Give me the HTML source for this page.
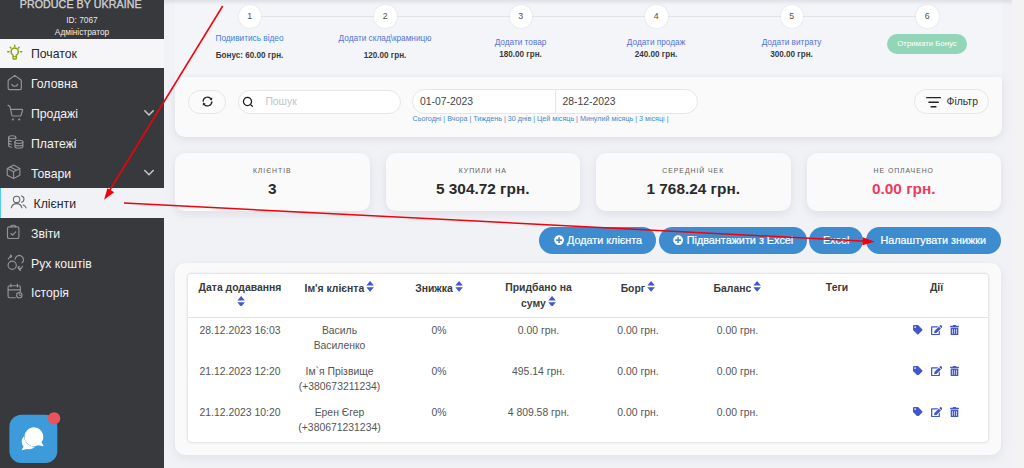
<!DOCTYPE html>
<html lang="uk">
<head>
<meta charset="utf-8">
<title>Клієнти</title>
<style>
*{box-sizing:border-box;margin:0;padding:0}
html,body{width:1024px;height:468px;overflow:hidden}
body{font-family:"Liberation Sans",sans-serif;background:#f1f2f6;color:#444;font-size:10.4px;position:relative}
.abs{position:absolute}
/* sidebar */
#side{position:absolute;left:0;top:0;width:164.4px;height:468px;background:#38393d;color:#eee}
#side .brand{position:absolute;left:0;width:164px;text-align:center;color:#d8d8d8;white-space:nowrap}
.mi{position:absolute;left:0;width:164.4px;height:29.85px;color:#f2f2f2;font-size:12.25px;line-height:31.3px;padding-left:31px;white-space:nowrap}
.mi svg{position:absolute;left:6px;top:6px;width:17px;height:17px;fill:none;stroke:#a9a9a9;stroke-width:1.1;stroke-linecap:round;stroke-linejoin:round}
.mi.start{background:#f6f6f8;color:#26262e}
.mi.act{background:#f1f2f6;color:#26262e;border-left:1.5px solid #56c8f5;padding-left:32.5px}
.mi .chev{position:absolute;left:143px;top:11px;width:10px;height:7px;stroke:#d0d0d0;stroke-width:1.7}
/* top shadow */
#topshade{position:absolute;left:164.4px;top:0;width:847.6px;height:5px;background:linear-gradient(rgba(120,120,130,.17),rgba(120,120,130,0))}
#sbar{position:absolute;left:1012px;top:0;width:12px;height:468px;background:#f3f3f3}
.card{position:absolute;background:#fafafa;border-radius:10px;box-shadow:0 3px 10px rgba(120,125,150,.13)}
.step{position:absolute;top:5px;width:22.6px;height:22.6px;border-radius:50%;background:#fff;box-shadow:0 0 2px rgba(0,0,0,.12);text-align:center;line-height:23.8px;font-size:8.8px;color:#505050}
.slabel{position:absolute;text-align:center;font-size:8.25px;color:#5373d8;white-space:nowrap;transform:translateX(-50%)}
.sval{position:absolute;text-align:center;font-size:8.15px;font-weight:bold;color:#3a3a3a;white-space:nowrap;transform:translateX(-50%)}
.pill{position:absolute;border:1px solid #e6e6e6;border-radius:13px;background:#fbfbfb}
.stat{position:absolute;top:152.5px;width:194.5px;height:58px;background:#fafafa;border-radius:10px;box-shadow:0 3px 10px rgba(120,125,150,.16);text-align:center}
.stat .l{position:absolute;left:0;right:0;top:14px;font-size:6.9px;letter-spacing:.95px;color:#606060;text-transform:uppercase}
.stat .v{position:absolute;left:0;right:0;top:27px;font-size:15.38px;font-weight:bold;color:#2b2b2b}
.btn{-webkit-text-stroke:.2px #fff;position:absolute;top:226.6px;height:27px;border-radius:13.4px;background:#3d8ccf;color:#fff;font-size:10.8px;line-height:26.9px;text-align:center;white-space:nowrap}
.th{position:absolute;top:280.8px;width:99.5px;text-align:center;font-weight:bold;font-size:10.4px;line-height:14.7px;color:#3a3a3a}
.td{position:absolute;width:99.5px;text-align:center;font-size:10.4px;line-height:14.7px;color:#555;white-space:nowrap}
.sort{display:inline-block;width:8.2px;height:10.8px;vertical-align:-0.3px;margin-left:2px}
</style>
</head>
<body>
<div id="sbar"></div>

<!-- steps / filter card -->
<div class="abs" style="left:175px;top:0;width:826.5px;height:130px;background:#f4f5f9"></div>
<div id="topshade"></div>
<div class="abs" style="left:175px;top:76.5px;width:826.5px;height:60.5px;background:#fafafa;border-radius:2px 2px 10px 10px;box-shadow:0 2px 9px rgba(120,125,150,.17)"></div>

<div class="abs" style="left:250px;top:16px;width:677px;height:1px;background:#e2e3e8"></div>
<div class="step" style="left:238.5px">1</div>
<div class="step" style="left:374px">2</div>
<div class="step" style="left:509.5px">3</div>
<div class="step" style="left:645px">4</div>
<div class="step" style="left:780.5px">5</div>
<div class="step" style="left:916px">6</div>

<div class="slabel" style="left:249.5px;top:34.2px;color:#3a7fdb">Подивитись відео</div>
<div class="sval" style="left:249.5px;top:50.9px">Бонус: 60.00 грн.</div>
<div class="slabel" style="left:385px;top:34.2px">Додати склад\крамницю</div>
<div class="sval" style="left:385px;top:50.9px">120.00 грн.</div>
<div class="slabel" style="left:520.5px;top:38px">Додати товар</div>
<div class="sval" style="left:520.5px;top:50px">180.00 грн.</div>
<div class="slabel" style="left:656px;top:38px">Додати продаж</div>
<div class="sval" style="left:656px;top:50px">240.00 грн.</div>
<div class="slabel" style="left:791.5px;top:38px">Додати витрату</div>
<div class="sval" style="left:791.5px;top:50px">300.00 грн.</div>
<div class="abs" style="left:887px;top:34px;width:80px;height:20px;border-radius:10px;background:#93d5b8;color:#fff;font-size:7.8px;line-height:20px;text-align:center">Отримати Бонус</div>

<!-- filter row -->
<div class="pill" style="left:188px;top:89.5px;width:38px;height:24px">
<svg class="abs" style="left:11.500px;top:4.600px;width:13px;height:13px" viewBox="-6.500 -6.500 13 13" fill="none" stroke="#1f1f1f" stroke-width="1.250" stroke-linecap="round" stroke-linejoin="round"><path d="M-4.38 -0.38A4.4 4.4 0 0 1 3.60 -2.52"/><path d="M4.38 0.38A4.4 4.4 0 0 1 -3.60 2.52"/><path d="M4.46 -1.07L4.78 -3.92L2.01 -2.32z" fill="#1f1f1f" stroke="none"/><path d="M-4.46 1.07L-4.78 3.92L-2.01 2.32z" fill="#1f1f1f" stroke="none"/></svg>
</div>
<div class="pill" style="left:238.2px;top:89.5px;width:162.8px;height:24px;background:#fff">
<svg class="abs" style="left:1.600px;top:4.900px;width:13px;height:13px" viewBox="-6.500 -6.500 13 13" fill="none" stroke="#1f1f1f" stroke-width="1.3" stroke-linecap="round"><circle cx="0" cy="0" r="4.050"/><path d="M3.100 3.100l1.700 1.700"/></svg>
<div class="abs" style="left:26.2px;top:0;line-height:22px;font-size:10.4px;color:#c4c4c4">Пошук</div>
</div>
<div class="pill" style="left:412px;top:89px;width:286px;height:24.8px;background:#fff">
<div class="abs" style="left:142px;top:0;width:1px;height:23px;background:#e6e6e6"></div>
<div class="abs" style="left:7px;top:0;line-height:23.8px;font-size:10.35px;color:#444">01-07-2023</div>
<div class="abs" style="left:149.5px;top:0;line-height:23.8px;font-size:10.35px;color:#444">28-12-2023</div>
</div>
<div class="abs" style="left:412.5px;top:114.5px;font-size:7.17px;color:#3f8ad0;white-space:nowrap;line-height:9px">Сьогодні | Вчора | Тиждень | 30 днів | Цей місяць | Минулий місяць | 3 місяці |</div>
<div class="pill" style="left:914px;top:89.1px;width:75px;height:24.6px">
<svg class="abs" style="left:10.600px;top:5.900px;width:16px;height:12px" viewBox="0 0 16 12" fill="none" stroke="#222" stroke-width="1.450"><path d="M.2 1.600h14.700M2.400 6.200h10.400M4.600 10.800h5.800"/></svg>
<div class="abs" style="left:31.5px;top:0;line-height:24px;font-size:10.4px;color:#333">Фільтр</div>
</div>

<!-- stats -->
<div class="stat" style="left:175px"><div class="l">Клієнтів</div><div class="v">3</div></div>
<div class="stat" style="left:385.5px"><div class="l">Купили на</div><div class="v">5 304.72 грн.</div></div>
<div class="stat" style="left:596px"><div class="l">Середній чек</div><div class="v">1 768.24 грн.</div></div>
<div class="stat" style="left:806.5px"><div class="l">Не оплачено</div><div class="v" style="color:#ec3b5e">0.00 грн.</div></div>

<!-- buttons -->
<div class="btn" style="left:539px;width:117.2px;text-align:left;padding-left:28px"><svg class="abs" style="left:14.5px;top:8.300px;width:10.2px;height:10.2px" viewBox="0 0 512 512"><path fill="#fff" d="M256 8C119 8 8 119 8 256s111 248 248 248 248-111 248-248S393 8 256 8zm144 276c0 6.600-5.400 12-12 12h-92v92c0 6.600-5.400 12-12 12h-56c-6.600 0-12-5.400-12-12v-92h-92c-6.600 0-12-5.400-12-12v-56c0-6.600 5.400-12 12-12h92v-92c0-6.600 5.400-12 12-12h56c6.600 0 12 5.400 12 12v92h92c6.600 0 12 5.400 12 12v56z"/></svg>Додати клієнта</div>
<div class="btn" style="left:658.6px;width:148px;text-align:left;padding-left:28.2px"><svg class="abs" style="left:14px;top:8.300px;width:10.2px;height:10.2px" viewBox="0 0 512 512"><path fill="#fff" d="M256 8C119 8 8 119 8 256s111 248 248 248 248-111 248-248S393 8 256 8zm144 276c0 6.600-5.400 12-12 12h-92v92c0 6.600-5.400 12-12 12h-56c-6.600 0-12-5.400-12-12v-92h-92c-6.600 0-12-5.400-12-12v-56c0-6.600 5.400-12 12-12h92v-92c0-6.600 5.400-12 12-12h56c6.600 0 12 5.400 12 12v92h92c6.600 0 12 5.400 12 12v56z"/></svg>Підвантажити з Excel</div>
<div class="btn" style="left:808.8px;width:54.6px">Excel</div>
<div class="btn" style="left:866px;width:134.5px">Налаштувати знижки</div>

<!-- table card -->
<div class="card" style="left:175px;top:262.5px;width:826.2px;height:192px"></div>
<div class="abs" style="left:188px;top:273.5px;width:800px;height:168px;background:#fff;border-radius:3px;box-shadow:0 0 3px rgba(0,0,0,.22)"></div>
<div class="abs" style="left:188px;top:316.5px;width:800px;height:1px;background:#e2e2e2"></div>

<div class="th" style="left:190.25px">Дата додавання<br><svg class="sort" viewBox="0 0 7 10"><path d="M3.500 0L7 4.200H0z" fill="#4357cc"/><path d="M3.500 10L7 5.800H0z" fill="#4357cc"/></svg></div>
<div class="th" style="left:289.75px">Ім'я клієнта<svg class="sort" viewBox="0 0 7 10"><path d="M3.500 0L7 4.200H0z" fill="#4357cc"/><path d="M3.500 10L7 5.800H0z" fill="#4357cc"/></svg></div>
<div class="th" style="left:389.25px">Знижка<svg class="sort" viewBox="0 0 7 10"><path d="M3.500 0L7 4.200H0z" fill="#4357cc"/><path d="M3.500 10L7 5.800H0z" fill="#4357cc"/></svg></div>
<div class="th" style="left:488.75px">Придбано на<br>суму<svg class="sort" viewBox="0 0 7 10"><path d="M3.500 0L7 4.200H0z" fill="#4357cc"/><path d="M3.500 10L7 5.800H0z" fill="#4357cc"/></svg></div>
<div class="th" style="left:588.25px">Борг<svg class="sort" viewBox="0 0 7 10"><path d="M3.500 0L7 4.200H0z" fill="#4357cc"/><path d="M3.500 10L7 5.800H0z" fill="#4357cc"/></svg></div>
<div class="th" style="left:687.75px">Баланс<svg class="sort" viewBox="0 0 7 10"><path d="M3.500 0L7 4.200H0z" fill="#4357cc"/><path d="M3.500 10L7 5.800H0z" fill="#4357cc"/></svg></div>
<div class="th" style="left:787.25px">Теги</div>
<div class="th" style="left:886.75px">Дії</div>
<div class="td" style="left:190.25px;top:324.1px">28.12.2023 16:03</div>
<div class="td" style="left:289.75px;top:324.1px">Василь<br>Василенко</div>
<div class="td" style="left:389.25px;top:324.1px">0%</div>
<div class="td" style="left:488.75px;top:324.1px">0.00 грн.</div>
<div class="td" style="left:588.25px;top:324.1px">0.00 грн.</div>
<div class="td" style="left:687.75px;top:324.1px">0.00 грн.</div>
<svg class="abs" style="left:913px;top:325.0px;width:9.5px;height:9.5px" viewBox="0 0 512 512"><path fill="#4357cc" d="M0 252.100V48C0 21.500 21.500 0 48 0h204.100a48 48 0 0 1 33.900 14.100l211.900 211.900c18.700 18.700 18.700 49.100 0 67.900L293.800 497.900c-18.700 18.700-49.100 18.700-67.900 0L14.100 286.100A48 48 0 0 1 0 252.100zM112 64c-26.500 0-48 21.500-48 48s21.500 48 48 48 48-21.500 48-48-21.500-48-48-48z"/></svg>
<svg class="abs" style="left:930.5px;top:324.7px;width:11.5px;height:10.2px" viewBox="0 0 576 512"><path fill="#4357cc" d="M402.600 83.200l90.200 90.200c3.800 3.800 3.800 10 0 13.800L274.400 405.600l-92.800 10.300c-12.400 1.400-22.900-9.100-21.500-21.500l10.300-92.800L388.800 83.200c3.800-3.800 10-3.800 13.800 0zm162-22.900l-48.800-48.800c-15.200-15.200-39.900-15.200-55.200 0l-35.400 35.400c-3.800 3.800-3.800 10 0 13.800l90.200 90.200c3.800 3.800 10 3.800 13.800 0l35.400-35.400c15.200-15.300 15.200-40 0-55.200zM384 346.200V448H64V128h229.800c3.200 0 6.200-1.300 8.500-3.500l40-40c7.600-7.600 2.200-20.500-8.500-20.500H48C21.500 64 0 85.500 0 112v352c0 26.500 21.500 48 48 48h352c26.500 0 48-21.500 48-48V306.200c0-10.700-12.900-16-20.500-8.500l-40 40c-2.200 2.300-3.500 5.300-3.500 8.500z"/></svg>
<svg class="abs" style="left:950px;top:324.7px;width:9px;height:10.2px" viewBox="0 0 448 512"><path fill="#4357cc" d="M32 464a48 48 0 0 0 48 48h288a48 48 0 0 0 48-48V128H32zm272-256a16 16 0 0 1 32 0v224a16 16 0 0 1-32 0zm-96 0a16 16 0 0 1 32 0v224a16 16 0 0 1-32 0zm-96 0a16 16 0 0 1 32 0v224a16 16 0 0 1-32 0zM432 32H312l-9.400-18.700A24 24 0 0 0 281.100 0H166.800a23.720 23.720 0 0 0-21.400 13.300L136 32H16A16 16 0 0 0 0 48v32a16 16 0 0 0 16 16h416a16 16 0 0 0 16-16V48a16 16 0 0 0-16-16z"/></svg>
<div class="td" style="left:190.25px;top:365.0px">21.12.2023 12:20</div>
<div class="td" style="left:289.75px;top:365.0px">Ім`я Прізвище<br>(+380673211234)</div>
<div class="td" style="left:389.25px;top:365.0px">0%</div>
<div class="td" style="left:488.75px;top:365.0px">495.14 грн.</div>
<div class="td" style="left:588.25px;top:365.0px">0.00 грн.</div>
<div class="td" style="left:687.75px;top:365.0px">0.00 грн.</div>
<svg class="abs" style="left:913px;top:365.9px;width:9.5px;height:9.5px" viewBox="0 0 512 512"><path fill="#4357cc" d="M0 252.100V48C0 21.500 21.500 0 48 0h204.100a48 48 0 0 1 33.900 14.100l211.900 211.900c18.700 18.700 18.700 49.100 0 67.900L293.800 497.900c-18.700 18.700-49.100 18.700-67.900 0L14.100 286.100A48 48 0 0 1 0 252.100zM112 64c-26.500 0-48 21.500-48 48s21.500 48 48 48 48-21.500 48-48-21.500-48-48-48z"/></svg>
<svg class="abs" style="left:930.5px;top:365.6px;width:11.5px;height:10.2px" viewBox="0 0 576 512"><path fill="#4357cc" d="M402.600 83.200l90.200 90.200c3.800 3.800 3.800 10 0 13.800L274.400 405.600l-92.800 10.300c-12.400 1.400-22.900-9.100-21.500-21.500l10.300-92.800L388.800 83.200c3.800-3.800 10-3.800 13.800 0zm162-22.900l-48.800-48.800c-15.200-15.200-39.900-15.200-55.200 0l-35.400 35.400c-3.800 3.800-3.800 10 0 13.800l90.200 90.200c3.800 3.800 10 3.800 13.800 0l35.400-35.400c15.200-15.300 15.200-40 0-55.200zM384 346.200V448H64V128h229.800c3.200 0 6.200-1.300 8.500-3.500l40-40c7.600-7.600 2.200-20.500-8.500-20.500H48C21.500 64 0 85.500 0 112v352c0 26.500 21.500 48 48 48h352c26.500 0 48-21.500 48-48V306.200c0-10.700-12.900-16-20.500-8.500l-40 40c-2.200 2.300-3.500 5.300-3.500 8.500z"/></svg>
<svg class="abs" style="left:950px;top:365.6px;width:9px;height:10.2px" viewBox="0 0 448 512"><path fill="#4357cc" d="M32 464a48 48 0 0 0 48 48h288a48 48 0 0 0 48-48V128H32zm272-256a16 16 0 0 1 32 0v224a16 16 0 0 1-32 0zm-96 0a16 16 0 0 1 32 0v224a16 16 0 0 1-32 0zm-96 0a16 16 0 0 1 32 0v224a16 16 0 0 1-32 0zM432 32H312l-9.400-18.700A24 24 0 0 0 281.100 0H166.800a23.720 23.720 0 0 0-21.400 13.300L136 32H16A16 16 0 0 0 0 48v32a16 16 0 0 0 16 16h416a16 16 0 0 0 16-16V48a16 16 0 0 0-16-16z"/></svg>
<div class="td" style="left:190.25px;top:405.9px">21.12.2023 10:20</div>
<div class="td" style="left:289.75px;top:405.9px">Ерен Єгер<br>(+380671231234)</div>
<div class="td" style="left:389.25px;top:405.9px">0%</div>
<div class="td" style="left:488.75px;top:405.9px">4 809.58 грн.</div>
<div class="td" style="left:588.25px;top:405.9px">0.00 грн.</div>
<div class="td" style="left:687.75px;top:405.9px">0.00 грн.</div>
<svg class="abs" style="left:913px;top:406.8px;width:9.5px;height:9.5px" viewBox="0 0 512 512"><path fill="#4357cc" d="M0 252.100V48C0 21.500 21.500 0 48 0h204.100a48 48 0 0 1 33.900 14.100l211.900 211.900c18.700 18.700 18.700 49.100 0 67.900L293.800 497.900c-18.700 18.700-49.100 18.700-67.900 0L14.100 286.100A48 48 0 0 1 0 252.100zM112 64c-26.500 0-48 21.500-48 48s21.500 48 48 48 48-21.500 48-48-21.500-48-48-48z"/></svg>
<svg class="abs" style="left:930.5px;top:406.5px;width:11.5px;height:10.2px" viewBox="0 0 576 512"><path fill="#4357cc" d="M402.600 83.200l90.200 90.200c3.800 3.800 3.800 10 0 13.800L274.400 405.600l-92.800 10.300c-12.400 1.400-22.900-9.100-21.500-21.500l10.300-92.800L388.800 83.200c3.800-3.800 10-3.800 13.800 0zm162-22.900l-48.800-48.800c-15.200-15.200-39.900-15.200-55.200 0l-35.400 35.400c-3.800 3.800-3.800 10 0 13.800l90.200 90.200c3.800 3.800 10 3.800 13.800 0l35.400-35.400c15.200-15.300 15.200-40 0-55.200zM384 346.200V448H64V128h229.800c3.200 0 6.200-1.300 8.500-3.500l40-40c7.600-7.600 2.200-20.500-8.500-20.500H48C21.500 64 0 85.500 0 112v352c0 26.500 21.500 48 48 48h352c26.500 0 48-21.500 48-48V306.200c0-10.700-12.900-16-20.500-8.500l-40 40c-2.200 2.300-3.500 5.300-3.500 8.500z"/></svg>
<svg class="abs" style="left:950px;top:406.5px;width:9px;height:10.2px" viewBox="0 0 448 512"><path fill="#4357cc" d="M32 464a48 48 0 0 0 48 48h288a48 48 0 0 0 48-48V128H32zm272-256a16 16 0 0 1 32 0v224a16 16 0 0 1-32 0zm-96 0a16 16 0 0 1 32 0v224a16 16 0 0 1-32 0zm-96 0a16 16 0 0 1 32 0v224a16 16 0 0 1-32 0zM432 32H312l-9.400-18.700A24 24 0 0 0 281.100 0H166.800a23.720 23.720 0 0 0-21.400 13.300L136 32H16A16 16 0 0 0 0 48v32a16 16 0 0 0 16 16h416a16 16 0 0 0 16-16V48a16 16 0 0 0-16-16z"/></svg>

<!-- sidebar -->
<div id="side">
<div class="brand" style="top:-1.6px;font-size:10.7px;font-weight:normal;-webkit-text-stroke:.35px #cfcfcf;color:#cfcfcf;letter-spacing:.05px;left:-1.3px">PRODUCE BY UKRAINE</div>
<div class="brand" style="top:14.6px;font-size:8.35px;color:#e6e6e6">ID: 7067</div>
<div class="brand" style="top:26.6px;font-size:8.3px;color:#f0f0f0">Адміністратор</div>
<div class="mi start" style="top:39px;height:29.2px">Початок</div>
<div class="mi" style="top:68.800px">Головна</div>
<div class="mi" style="top:98.600px">Продажі</div>
<div class="mi" style="top:128.500px">Платежі</div>
<div class="mi" style="top:158.300px;line-height:33px">Товари</div>
<div class="mi act" style="top:188px;line-height:32.8px">Клієнти</div>
<div class="mi" style="top:217.800px;line-height:32.6px">Звіти</div>
<div class="mi" style="top:247.700px;line-height:32.4px">Рух коштів</div>
<div class="mi" style="top:277.500px">Історія</div>
<svg class="abs" style="left:0;top:0" width="164" height="468" viewBox="0 0 164 468" fill="none" stroke="#949496" stroke-width="1.15" stroke-linecap="round" stroke-linejoin="round">
<!-- bulb -->
<g stroke="#86a414" stroke-width="1.5">
<path d="M13.100 55.300c-1.400-.9-2-2.200-2-3.600a3.600 3.600 0 0 1 7.200 0c0 1.400-.6 2.700-2 3.600v2.900c0 .5-.4.900-.9.900h-1.400c-.5 0-.9-.4-.9-.9z"/>
<path d="M13.500 56.600h2.400" stroke-width="1"/>
<path d="M7.700 51.800h1.300M20.400 51.800h1.300M14.700 45.300v1.200M10.300 47.400l.6.600M19.100 47.400l-.6.600"/>
</g>
<!-- home -->
<path d="M14.750 75.400l-5.900 4.400c-.5.400-.7.800-.7 1.400v7.100c0 .8.600 1.300 1.300 1.300h10.600c.8 0 1.300-.6 1.300-1.300v-7.100c0-.6-.2-1-.7-1.400z"/>
<path d="M11.800 84.400c1.400 2.500 4.500 2.500 5.900 0"/>
<!-- cart -->
<path d="M8 105.400l1.300.5c.4.200.6.400.7.800l1.900 8.600c.1.500.4.700.9.700h7.300c.5 0 .8-.2.900-.7l1.600-5c.2-.6-.1-1-.7-1h-11.200"/>
<circle cx="12.900" cy="119.500" r="1.1" fill="#949496" stroke="none"/><circle cx="19.200" cy="119.500" r="1.1" fill="#949496" stroke="none"/>
<!-- coins -->
<ellipse cx="12.200" cy="137.200" rx="3.600" ry="1.500"/>
<path d="M8.600 137.200v8.400c0 .9 1.300 1.500 3 1.600M8.600 140c0 .8 1.200 1.400 2.800 1.500M8.600 142.800c0 .8 1.200 1.400 2.800 1.500M15.800 137.200v1.800"/>
<ellipse cx="18.900" cy="141.800" rx="4" ry="1.600"/>
<path d="M14.900 141.800v4.800c0 .9 1.800 1.600 4 1.600s4-.7 4-1.600v-4.800M14.900 144.300c0 .9 1.800 1.600 4 1.600s4-.7 4-1.600"/>
<!-- box -->
<path d="M13.550 165.100l6.300 3.300v6.900l-6.300 3.300-6.300-3.300v-6.900z"/>
<path d="M7.400 168.500l6.150 3.200 6.150-3.200M13.550 171.700v6.800M10.300 166.900l6.300 3.300"/>
<!-- users -->
<g stroke="#66666a" stroke-width="1.05">
<circle cx="16.600" cy="199.400" r="3.200"/>
<path d="M11.300 207.800c.6-2.600 2.700-4.200 5.300-4.200s4.700 1.600 5.300 4.200"/>
<path d="M21.500 195.900a3.300 3.300 0 0 1 0 6.400M23.200 204.900c1.500.6 2.500 1.700 2.900 3"/>
</g>
<!-- clipboard -->
<rect x="7.500" y="226.800" width="11.400" height="11.700" rx="1.600"/>
<path d="M10.900 226.800v-.6c0-.6.400-1 1-1h2.600c.6 0 1 .4 1 1v.6"/>
<path d="M10.900 233.500l1.700 1.700 3.100-3.400"/>
<!-- money flow -->
<circle cx="12.200" cy="265.300" r="4.100"/>
<path d="M15.100 259.300a4.200 4.200 0 1 1 6.800 3.600"/>
<path d="M8.300 259.200c.5-1.700 1.700-2.800 3.300-3.200M10.300 255l1.500 1-1 1.500"/>
<path d="M22.600 266.200c-.5 1.700-1.700 2.800-3.300 3.200M20.600 270.400l-1.500-1 1-1.500M19.300 266.300l-1.500 1.200 1.300 1.400"/>
<!-- calendar -->
<path d="M15.400 297.700h-5.900c-.8 0-1.400-.6-1.400-1.400v-9.200c0-.8.600-1.400 1.400-1.400h9.400c.8 0 1.400.6 1.400 1.400v4.600"/>
<path d="M10.900 284v3M17.400 284v3M8.100 289.800h12.200"/>
<circle cx="19.300" cy="295.300" r="2.700"/>
<path d="M19.300 293.900v1.500h1.300" stroke-width=".9"/>
<!-- chevrons -->
<path d="M144.800 110.800l4.200 4.200 4.200-4.200M144.800 170.500l4.200 4.200 4.200-4.200" stroke="#c4c4c4" stroke-width="1.600"/>
</svg>
<svg class="abs" style="left:0;top:400px" width="80" height="68" viewBox="0 400 80 68">
<rect x="9.400" y="414.800" width="47.900" height="48.300" rx="12" fill="#3d9bdc"/>
<path d="M21.500 450.300l2.100-3.700a7.600 7.600 0 1 1 3.600 2.300z" fill="#fff"/>
<circle cx="34.400" cy="436.300" r="10.400" fill="#3d9bdc"/>
<path d="M43.800 446.300l-2.300-4a9.400 9.400 0 1 0-3.500 2.900z" fill="#fff"/>
<circle cx="54.100" cy="418.400" r="6.200" fill="#e9545b"/>
</svg>
</div>

<!-- arrows -->
<svg class="abs" style="left:0;top:0" width="1024" height="468" viewBox="0 0 1024 468">
<line x1="222.7" y1="6" x2="108" y2="193" stroke="#f2000c" stroke-width="1.500"/>
<polygon points="104.1,199.700 107.400,188.300 114.200,192.200" fill="#f2000c"/>
<line x1="124" y1="203" x2="866" y2="241.200" stroke="#f2000c" stroke-width="1.500"/>
<polygon points="874.700,241.700 862.400,245.200 862.800,237.200" fill="#f2000c"/>
</svg>
</body>
</html>
